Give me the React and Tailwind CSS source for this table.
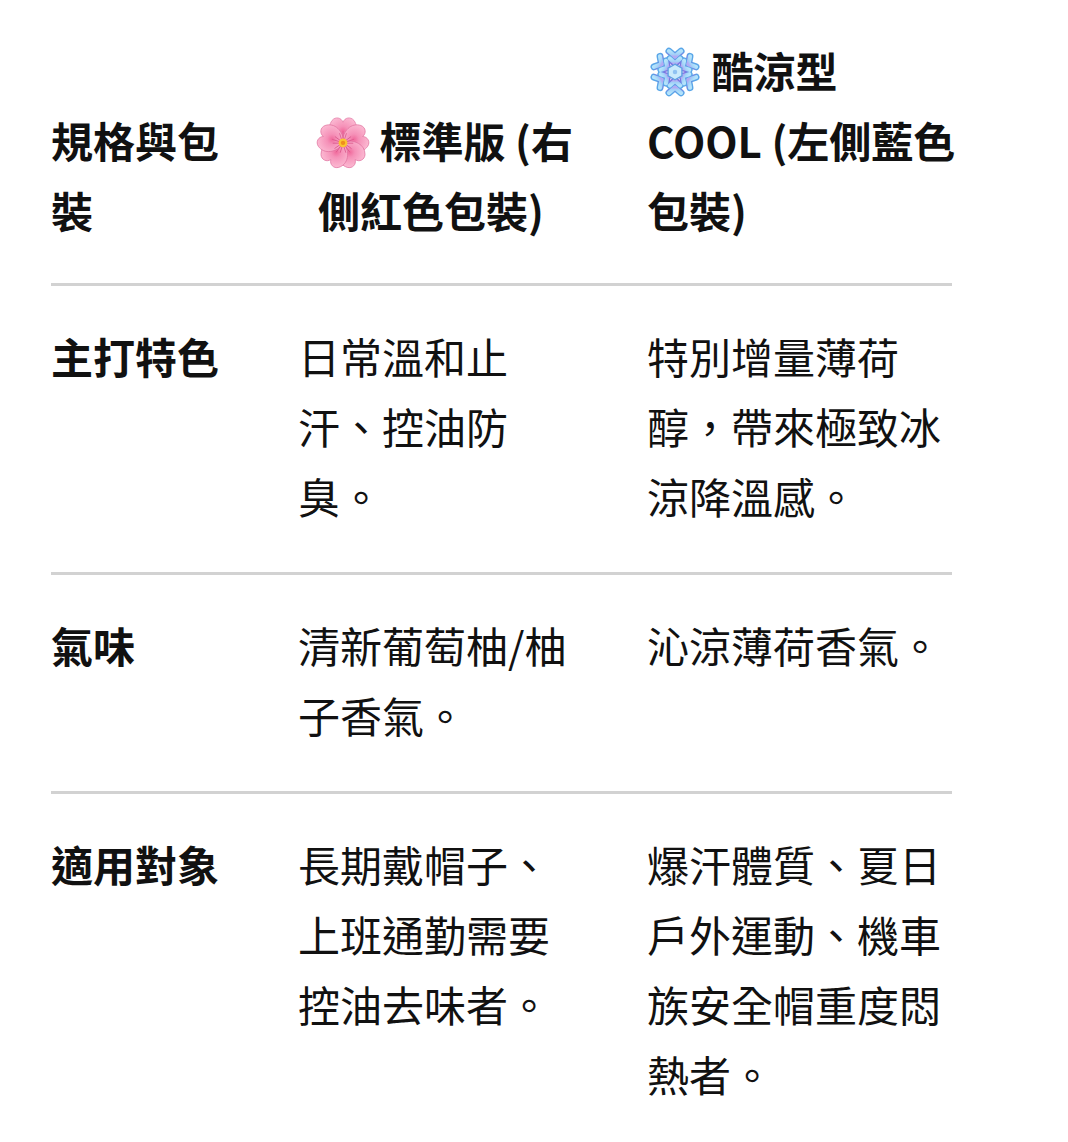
import React from "react";

const FONT = { fontFamily: '"Noto Sans CJK TC", "Noto Sans CJK SC", "Noto Sans", sans-serif' };

function Blossom() {
  const angles = [0, 72, 144, 216, 288];
  return (
    <svg width="54" height="54" viewBox="0 0 64 64" className="inline-block align-[-11px] -ml-[2px]">
      <defs>
        <radialGradient id="pg" cx="50%" cy="52%" r="55%">
          <stop offset="0%" stopColor="#f06a9c" />
          <stop offset="35%" stopColor="#f591b8" />
          <stop offset="100%" stopColor="#fbb6d0" />
        </radialGradient>
      </defs>
      {angles.map((a) => (
        <path
          key={a}
          transform={`rotate(${a} 32 33)`}
          d="M32 34 C 18 29, 12 16, 19 6.5 C 23 1.5, 30 3, 32 8.5 C 34 3, 41 1.5, 45 6.5 C 52 16, 46 29, 32 34 Z"
          fill="url(#pg)"
          stroke="#e0729f"
          strokeWidth="0.8"
        />
      ))}
      {angles.map((a) => (
        <g key={"l" + a} transform={`rotate(${a} 32 33)`} stroke="#d9568a" strokeWidth="0.9" strokeLinecap="round" fill="none">
          <path d="M32 31 L32 20" />
          <path d="M31 31 L28 22" />
          <path d="M33 31 L36 22" />
        </g>
      ))}
      <circle cx="32" cy="33" r="5.2" fill="#fbc531" />
      <circle cx="32" cy="33" r="2.6" fill="#ef8f1e" />
    </svg>
  );
}

function Snowflake() {
  const angles = [0, 60, 120, 180, 240, 300];
  const arm = (
    <>
      <path d="M32 32 L32 6" />
      <path d="M32 14 L25 8" />
      <path d="M32 14 L39 8" />
      <path d="M32 22 L26 16.5" />
      <path d="M32 22 L38 16.5" />
    </>
  );
  return (
    <svg width="50" height="52" viewBox="5 2 54 60" className="inline-block align-[-10px] ml-[3px] mr-[2px]">
      <defs>
        <linearGradient id="sg" x1="0" y1="0" x2="0" y2="1">
          <stop offset="0%" stopColor="#b4e3fb" />
          <stop offset="60%" stopColor="#a2d2f8" />
          <stop offset="100%" stopColor="#b2abf4" />
        </linearGradient>
        <linearGradient id="so" x1="0" y1="0" x2="0" y2="1">
          <stop offset="0%" stopColor="#5aa6e8" />
          <stop offset="100%" stopColor="#7b74e0" />
        </linearGradient>
      </defs>
      <g stroke="url(#so)" strokeWidth="8" strokeLinecap="round" strokeLinejoin="round" fill="none">
        {angles.map((a) => (
          <g key={a} transform={`rotate(${a} 32 32)`}>{arm}</g>
        ))}
      </g>
      <g stroke="url(#sg)" strokeWidth="4.8" strokeLinecap="round" strokeLinejoin="round" fill="none">
        {angles.map((a) => (
          <g key={a} transform={`rotate(${a} 32 32)`}>{arm}</g>
        ))}
      </g>
      <polygon points="32,23 40,27.5 40,36.5 32,41 24,36.5 24,27.5" fill="#c9eafc" stroke="#5fa0e2" strokeWidth="1.6" />
      <circle cx="32" cy="32" r="2.6" fill="#8fc2f2" />
    </svg>
  );
}

const rows = [
  ["主打特色", "日常溫和止汗、控油防臭。", "特別增量薄荷醇，帶來極致冰涼降溫感。"],
  ["氣味", "清新葡萄柚/柚子香氣。", "沁涼薄荷香氣。"],
  ["適用對象", "長期戴帽子、上班通勤需要控油去味者。", "爆汗體質、夏日戶外運動、機車族安全帽重度悶熱者。"],
];

const GRID = "grid grid-cols-[247px_349px_305px]";

export default function App() {
  return (
    <div className="min-h-[1142px] bg-white text-[#111]" style={FONT}>
      <div className="ml-[51px] w-[901px] text-[42px] leading-[70px]">
        <div className={`${GRID} items-end border-b-[3px] border-[#d2d2d2] pt-[35px] pb-[38px] font-bold`}>
          <div className="pr-[57px]">規格與包裝</div>
          <div className="pl-[20px] pr-[67px]">
            <Blossom /> 標準版 (右側紅色包裝)
          </div>
          <div className="w-[325px]">
            <div>
              <Snowflake /> 酷涼型
            </div>
            <div>COOL (左側藍色包裝)</div>
          </div>
        </div>
        {rows.map((r, i) => (
          <div
            key={i}
            className={
              i < rows.length - 1
                ? `${GRID} items-start border-b-[3px] border-[#d2d2d2] pt-[35px] pb-[41px]`
                : `${GRID} items-start pt-[35px] pb-[29px]`
            }
          >
            <div className="pr-[57px] font-bold">{r[0]}</div>
            <div className="pr-[67px]">{r[1]}</div>
            <div className="w-[325px]">{r[2]}</div>
          </div>
        ))}
      </div>
    </div>
  );
}
